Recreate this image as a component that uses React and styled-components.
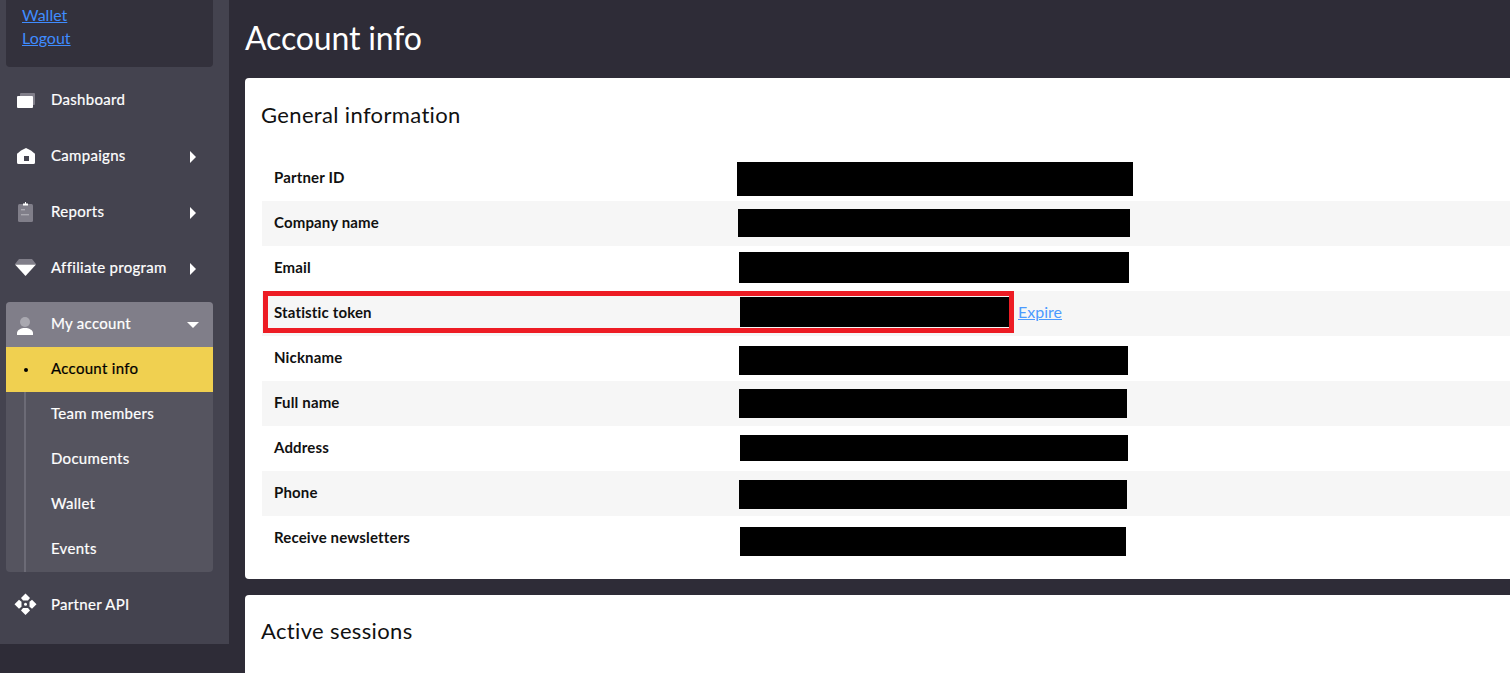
import styled, { createGlobalStyle } from "styled-components";

const GlobalStyle = createGlobalStyle`
  html, body {
    margin: 0;
    height: 100%;
    overflow: hidden;
    background: #2e2c37;
  }
  body {
    font-family: "Lato", "Open Sans", sans-serif;
  }
`;

const DashboardIcon = () => (
  <svg width="24" height="24" viewBox="0 0 24 24">
    <rect x="7" y="6" width="15" height="12" rx="1" fill="#807e89" />
    <rect x="4" y="9" width="16" height="12" rx="1" fill="#fff" />
  </svg>
);

const CampaignsIcon = () => (
  <svg width="24" height="24" viewBox="0 0 24 24">
    <path
      d="M13 5 L18 7.5 L21 10 A1.5 1.5 0 0 1 22 11.5 V19.5 A1.5 1.5 0 0 1 20.5 21 H5.5 A1.5 1.5 0 0 1 4 19.5 V11.5 A1.5 1.5 0 0 1 5 10 L8 7.5 Z"
      fill="#fff"
    />
    <rect x="11" y="13" width="5" height="5" fill="#44434f" />
  </svg>
);

const ReportsIcon = () => (
  <svg width="24" height="24" viewBox="0 0 24 24">
    <rect x="5" y="5" width="15" height="18" rx="1.5" fill="#807e89" />
    <path d="M10 6.5 V4.5 H12 V3 H13 V4.5 H15 V6.5 Z" fill="#fff" />
    <rect x="8" y="10" width="4" height="1.4" fill="#a9a8b0" />
    <rect x="8" y="15" width="8" height="1.4" fill="#a9a8b0" />
  </svg>
);

const AffiliateIcon = () => (
  <svg width="24" height="24" viewBox="0 0 24 24">
    <path d="M6 4 H19 L23 9 H2 Z" fill="#807e89" />
    <path d="M2 9.5 H23 L12.5 21 Z" fill="#fff" />
  </svg>
);

const UserIcon = () => (
  <svg width="24" height="24" viewBox="0 0 24 24">
    <circle cx="12" cy="9" r="5" fill="#a9a8b0" />
    <path d="M4 22 V20 C4 17 8 15 12 15 C16 15 20 17 20 20 V22 Z" fill="#fff" />
  </svg>
);

const ApiIcon = () => (
  <svg width="24" height="24" viewBox="0 0 24 24" fill="#fff">
    <path d="M12.5 1.5 L17 6 L15 8.5 H10 L8 6 Z" />
    <path d="M12.5 23 L17 18.5 L15 16 H10 L8 18.5 Z" />
    <path d="M1.5 12.25 L6 7.75 L8.5 9.75 V14.75 L6 16.75 Z" />
    <path d="M23.5 12.25 L19 7.75 L16.5 9.75 V14.75 L19 16.75 Z" />
    <circle cx="12.5" cy="12.25" r="1.5" />
  </svg>
);

const ArrowRight = () => (
  <svg width="6" height="12" viewBox="0 0 6 12">
    <path d="M0 0 L6 6 L0 12 Z" fill="#fff" />
  </svg>
);

const ArrowDown = () => (
  <svg width="12" height="6" viewBox="0 0 12 6">
    <path d="M0 0 H12 L6 6 Z" fill="#fff" />
  </svg>
);

const menu = [
  { label: "Dashboard", icon: <DashboardIcon /> },
  { label: "Campaigns", icon: <CampaignsIcon />, more: true },
  { label: "Reports", icon: <ReportsIcon />, more: true },
  { label: "Affiliate program", icon: <AffiliateIcon />, more: true },
];

const subMenu = ["Team members", "Documents", "Wallet", "Events"];

const rows = [
  { label: "Partner ID", left: 0, top: 6, width: 396, height: 34 },
  { label: "Company name", left: 1, top: 8, width: 392, height: 28 },
  { label: "Email", left: 2, top: 6, width: 390, height: 31 },
  { label: "Statistic token", left: 3, top: 6, width: 269, height: 30, expire: true },
  { label: "Nickname", left: 2, top: 10, width: 389, height: 29 },
  { label: "Full name", left: 2, top: 8, width: 388, height: 29 },
  { label: "Address", left: 3, top: 9, width: 388, height: 26 },
  { label: "Phone", left: 2, top: 9, width: 388, height: 29 },
  { label: "Receive newsletters", left: 3, top: 11, width: 386, height: 29 },
];

export default function App() {
  return (
    <>
      <GlobalStyle />
      <Layout>
        <Sidebar>
          <UserPanel>
            <PanelLink href="#">Wallet</PanelLink>
            <PanelLink href="#">Logout</PanelLink>
          </UserPanel>
          <Nav>
            {menu.map((item) => (
              <NavItem key={item.label}>
                {item.icon}
                <span>{item.label}</span>
                {item.more && (
                  <ItemArrow>
                    <ArrowRight />
                  </ItemArrow>
                )}
              </NavItem>
            ))}
            <Group>
              <GroupHead>
                <UserIcon />
                <span>My account</span>
                <HeadArrow>
                  <ArrowDown />
                </HeadArrow>
              </GroupHead>
              <ActiveItem>Account info</ActiveItem>
              <SubList>
                {subMenu.map((label) => (
                  <SubItem key={label}>{label}</SubItem>
                ))}
              </SubList>
            </Group>
            <NavItem>
              <ApiIcon />
              <span>Partner API</span>
            </NavItem>
          </Nav>
        </Sidebar>
        <Main>
          <PageTitle>Account info</PageTitle>
          <Card>
            <CardTitle $lift={6}>General information</CardTitle>
            {rows.map((row) => (
              <Row key={row.label}>
                <Label>{row.label}</Label>
                <Redacted
                  $left={row.left}
                  $top={row.top}
                  $width={row.width}
                  $height={row.height}
                />
                {row.expire && (
                  <>
                    <ExpireLink href="#">Expire</ExpireLink>
                    <Highlight />
                  </>
                )}
              </Row>
            ))}
          </Card>
          <Card>
            <CardTitle $lift={8}>Active sessions</CardTitle>
          </Card>
        </Main>
      </Layout>
    </>
  );
}

const Layout = styled.div`
  display: flex;
  align-items: flex-start;
  height: 673px;
  overflow: hidden;
`;

const Sidebar = styled.aside`
  width: 229px;
  height: 644px;
  flex-shrink: 0;
  background: #44434f;
  padding: 0 16px 0 6px;
  box-sizing: border-box;
`;

const UserPanel = styled.div`
  height: 67px;
  box-sizing: border-box;
  padding: 4px 0 0 16px;
  background: #33313c;
  border-radius: 0 0 4px 4px;
  display: flex;
  flex-direction: column;
  align-items: flex-start;
  gap: 1px;
`;

const PanelLink = styled.a`
  color: #3f8cff;
  font-size: 16px;
  line-height: 22px;
`;

const Nav = styled.nav`
  padding-top: 4px;
  display: flex;
  flex-direction: column;
`;

const NavItem = styled.div`
  height: 56px;
  display: flex;
  align-items: center;
  gap: 14px;
  padding: 0 17px 0 7px;
  color: #fff;
  font-size: 15px;
  letter-spacing: 0.3px;
  -webkit-text-stroke: 0.2px #fff;
  &:nth-of-type(4) {
    margin-bottom: 7px;
  }
  &:last-child {
    margin-top: 4px;
  }
`;

const ItemArrow = styled.span`
  margin-left: auto;
  display: flex;
  padding-top: 3px;
`;

const Group = styled.div`
  border-radius: 4px;
  overflow: hidden;
  background: #55545f;
`;

const GroupHead = styled.div`
  height: 45px;
  display: flex;
  align-items: center;
  gap: 14px;
  padding: 0 14px 0 7px;
  background: #807e89;
  color: #fff;
  font-size: 15px;
  letter-spacing: 0.3px;
  -webkit-text-stroke: 0.2px #fff;
  span:nth-of-type(1) {
    margin-bottom: 4px;
  }
`;

const HeadArrow = styled.span`
  margin-left: auto;
  display: flex;
`;

const ActiveItem = styled.div`
  height: 45px;
  box-sizing: border-box;
  padding: 0 0 4px 45px;
  display: flex;
  align-items: center;
  background: #f0d050;
  color: #000;
  font-size: 15px;
  letter-spacing: 0.3px;
  -webkit-text-stroke: 0.2px #000;
  position: relative;
  &::before {
    content: "";
    position: absolute;
    left: 18px;
    top: 21px;
    width: 4px;
    height: 4px;
    border-radius: 50%;
    background: #000;
  }
`;

const SubList = styled.div`
  margin-left: 18px;
  border-left: 2px solid #6c6b76;
`;

const SubItem = styled.div`
  height: 45px;
  box-sizing: border-box;
  padding: 0 0 4px 25px;
  display: flex;
  align-items: center;
  color: #fff;
  font-size: 15px;
  letter-spacing: 0.3px;
  -webkit-text-stroke: 0.2px #fff;
`;

const Main = styled.main`
  flex: 1;
  min-width: 0;
  padding-left: 16px;
  overflow: hidden;
`;

const PageTitle = styled.h1`
  margin: 0;
  height: 78px;
  display: flex;
  align-items: center;
  color: #fff;
  font-size: 32px;
  font-weight: 400;
  letter-spacing: -0.15px;
  padding-bottom: 4px;
  box-sizing: border-box;
`;

const Card = styled.section`
  width: 1285px;
  box-sizing: border-box;
  background: #fff;
  border-radius: 4px;
  padding: 0 20px 18px 17px;
  margin-bottom: 16px;
`;

const CardTitle = styled.h2`
  margin: 0 0 0 -1px;
  height: 78px;
  padding-bottom: ${(p) => p.$lift}px;
  box-sizing: border-box;
  display: flex;
  align-items: center;
  color: #111;
  font-size: 22px;
  font-weight: 400;
  letter-spacing: 0.35px;
`;

const Row = styled.div`
  height: 45px;
  display: flex;
  align-items: flex-start;
  position: relative;
  &:nth-of-type(even) {
    background: #f6f6f6;
  }
`;

const Label = styled.div`
  width: 475px;
  flex-shrink: 0;
  box-sizing: border-box;
  padding-left: 12px;
  line-height: 42px;
  color: #111;
  font-size: 15px;
  font-weight: 700;
  letter-spacing: 0.15px;
`;

const Redacted = styled.div`
  margin-left: ${(p) => p.$left}px;
  margin-top: ${(p) => p.$top}px;
  width: ${(p) => p.$width}px;
  height: ${(p) => p.$height}px;
  background: #000;
  flex-shrink: 0;
`;

const ExpireLink = styled.a`
  margin-left: 9px;
  color: #4c9aff;
  font-size: 16px;
  line-height: 42px;
`;

const Highlight = styled.div`
  position: absolute;
  left: 1px;
  top: 0;
  width: 751px;
  height: 42px;
  box-sizing: border-box;
  border: 5px solid #ed1c24;
  pointer-events: none;
`;
